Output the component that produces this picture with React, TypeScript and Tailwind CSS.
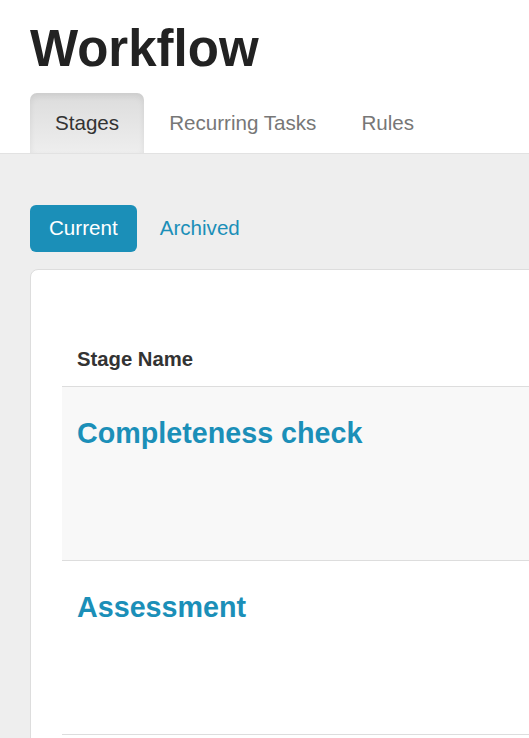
const stages = [
  { name: "Completeness check", shaded: true },
  { name: "Assessment", shaded: false },
];

export default function App() {
  return (
    <div className="w-[529px] h-[738px] overflow-hidden bg-white font-['Liberation_Sans',Arial,sans-serif]">
      {/* header */}
      <div className="pl-[30px] pt-[21px]">
        <h1 className="text-[51px] leading-[56px] font-bold text-[#222]">Workflow</h1>
      </div>
      <div className="flex pl-[30px] mt-[16px] h-[60px]">
        <div className="px-[25px] h-[60px] flex items-center rounded-t-[7px] bg-gradient-to-b from-[#dcdcdc] to-[#eeeeee] shadow-[inset_0_3px_6px_rgba(0,0,0,0.08)] text-[20.6px] text-[#333]">
          Stages
        </div>
        <div className="px-[25px] flex items-center text-[20.6px] text-[#777]">Recurring Tasks</div>
        <div className="px-[20px] flex items-center text-[20.6px] text-[#777]">Rules</div>
      </div>

      {/* body */}
      <div className="bg-[#eeeeee] border-t border-[#e2e2e2] pl-[30px] pt-[51px] h-[900px]">
        <div className="flex items-center">
          <button className="h-[47px] px-[19px] rounded-[6px] bg-[#1b8fb8] text-white text-[20.6px]">Current</button>
          <a className="ml-[23px] text-[20.6px] text-[#1b8fb8]">Archived</a>
        </div>

        <div className="mt-[17px] w-[640px] bg-white border border-[#dddddd] rounded-[8px] pl-[31px] pt-[75px] pb-[120px]">
          <div className="border-b border-[#dddddd] px-[15px] pb-[13px] text-[20.3px] leading-[28px] font-bold text-[#333]">
            Stage Name
          </div>
          {stages.map((s) => (
            <div
              key={s.name}
              className={`h-[174px] border-b border-[#dddddd] px-[15px] pt-[30px] ${s.shaded ? "bg-[#f8f8f8]" : "bg-white"}`}
            >
              <a className="text-[28.7px] leading-[32px] font-bold text-[#1b8fb8]">{s.name}</a>
            </div>
          ))}
        </div>
      </div>
    </div>
  );
}
